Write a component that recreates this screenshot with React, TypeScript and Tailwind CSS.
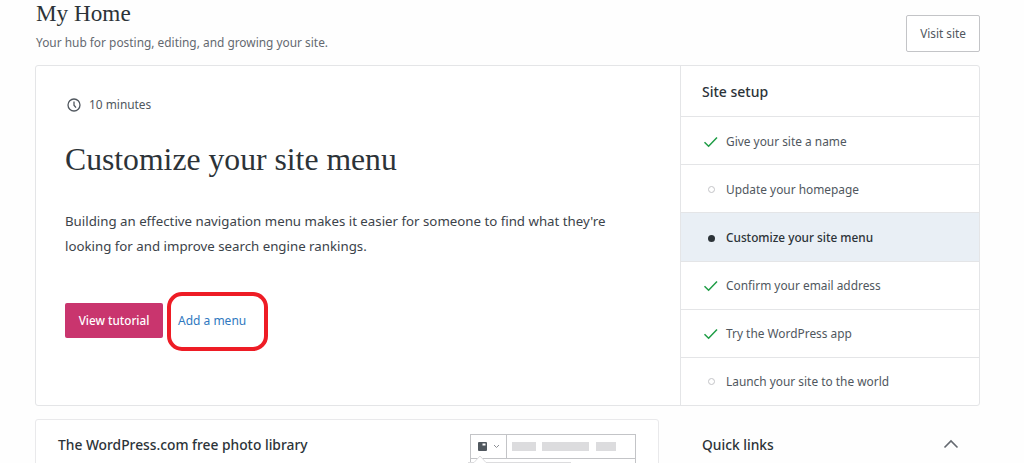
const sans = "font-['Noto_Sans',sans-serif]";

function Check() {
  return (
    <svg width="16" height="12" viewBox="0 0 16 12" fill="none" stroke="#1f9d46" strokeWidth="1.5">
      <path d="M1.5 6.2 L5.6 10.2 L14 1.4" />
    </svg>
  );
}

function Status({ kind }: { kind: string }) {
  if (kind === "done") return <Check />;
  if (kind === "current") return <span className="h-[7px] w-[7px] rounded-full bg-[#2c3338]" />;
  return <span className="h-[7px] w-[7px] rounded-full border border-[#c3c4c7] bg-white" />;
}

const rows = [
  { label: "Give your site a name", kind: "done", h: "h-[48px] pt-[2px]" },
  { label: "Update your homepage", kind: "todo", h: "h-[48px] pt-[2px]" },
  { label: "Customize your site menu", kind: "current", h: "h-[49px] pt-[2px]" },
  { label: "Confirm your email address", kind: "done", h: "h-[48px]" },
  { label: "Try the WordPress app", kind: "done", h: "h-[48px]" },
  { label: "Launch your site to the world", kind: "todo", h: "h-[47px]" },
];

export default function App() {
  return (
    <div className={`relative h-[463px] w-[1024px] overflow-hidden bg-[#fefefe] pl-[35px] pr-[44px] text-[#2c3338] ${sans}`}>
      <header className="flex h-[65px] items-start justify-between">
        <div>
          <h1 className="pl-[1px] font-['Liberation_Serif',serif] text-[23.2px] leading-[26px] text-[#2c3338]">My Home</h1>
          <p className="mt-[7px] pl-[1px] text-[11.9px] leading-[18px] text-[#646970]">Your hub for posting, editing, and growing your site.</p>
        </div>
        <button className="mt-[15px] h-[37px] w-[74px] rounded-[2px] border border-[#c3c4c7] bg-white text-[11.8px] text-[#50575e]">Visit site</button>
      </header>

      <section className="flex h-[341px] rounded-[3px] border border-[#e4e5e7] bg-white">
        <div className="w-[644px] pl-[29px] pt-[29px]">
          <div className="flex h-[20px] items-center gap-[8px] pl-[2px]">
            <svg width="14" height="14" viewBox="0 0 14 14" fill="none" stroke="#50575e" strokeWidth="1.3">
              <circle cx="7" cy="7" r="6" />
              <path d="M7 3.5 V7.2 L9 9.6" />
            </svg>
            <span className="-mt-[1px] text-[11.9px] text-[#50575e]">10 minutes</span>
          </div>
          <h2 className="mt-[25px] font-['Liberation_Serif',serif] text-[31.7px] leading-[40px] text-[#2c3338]">Customize your site menu</h2>
          <p className="mt-[29px] w-[580px] text-[13.27px] leading-[25px] text-[#3c434a]">
            Building an effective navigation menu makes it easier for someone to find what they're looking for and improve search engine rankings.
          </p>
          <div className="mt-[44px] flex items-center gap-[15px]">
            <button className="h-[35px] w-[98px] rounded-[2px] bg-[#c9356e] text-[11.7px] font-medium text-white">View tutorial</button>
            <a className="text-[12px] text-[#2f78c0]">Add a menu</a>
          </div>
        </div>
        <aside className="flex-1 border-l border-[#e4e5e7]">
          <div className="flex h-[51px] items-center border-b border-[#e4e5e7] pl-[21px] text-[14px] font-medium text-[#2c3338]">Site setup</div>
          {rows.map((r, i) => (
            <div
              key={r.label}
              className={`flex items-center ${r.h} ${i < rows.length - 1 ? "border-b border-[#e4e5e7]" : ""} ${r.kind === "current" ? "bg-[#e9eff5] font-medium text-[11.8px] text-[#2c3338]" : "text-[11.9px] text-[#50575e]"}`}
            >
              <span className="flex w-[45px] justify-center pl-[15px]">
                <Status kind={r.kind} />
              </span>
              <span>{r.label}</span>
            </div>
          ))}
        </aside>
      </section>

      <div className="mt-[13px] flex">
        <section className="relative flex h-[80px] w-[624px] rounded-t-[3px] border border-[#e9e9eb] bg-white">
          <h3 className="ml-[22px] mt-[15px] text-[13.8px] font-medium leading-[20px] text-[#2c3338]">The WordPress.com free photo library</h3>
          <div className="relative ml-auto mr-[22px] mt-[14px] h-[60px] w-[166px] border border-[#c3c4c7]">
            <div className="flex h-[24px] items-center border-b border-[#c3c4c7]">
              <div className="flex h-full w-[36px] items-center gap-[6px] border-r border-[#c3c4c7] pl-[7px]">
                <svg width="9" height="9" viewBox="0 0 9 9">
                  <rect width="9" height="9" rx="1" fill="#50575e" />
                  <rect x="4.5" y="1.5" width="3" height="2" fill="#ffffff" />
                </svg>
                <svg width="7" height="5" viewBox="0 0 7 5" fill="none" stroke="#8c8f94" strokeWidth="1"><path d="M1 1 L3.5 3.5 L6 1" /></svg>
              </div>
              <span className="ml-[5px] h-[9px] w-[24px] bg-[#dcdcde]" />
              <span className="ml-[6px] h-[9px] w-[47px] bg-[#dcdcde]" />
              <span className="ml-[7px] h-[9px] w-[20px] bg-[#dcdcde]" />
            </div>
            <svg className="absolute left-[-3px] top-[20px]" width="104" height="12" viewBox="0 0 104 12" fill="#ffffff" stroke="#dcdcde">
              <path d="M0 7.5 H6 L12 1 L18 7.5 H103" />
            </svg>
          </div>
        </section>
        <div className="flex h-[53px] flex-1 items-center justify-between pl-[43px] pr-[21px]">
          <span className="text-[13.8px] font-medium text-[#2c3338]">Quick links</span>
          <svg className="mb-[4px]" width="16" height="10" viewBox="0 0 16 10" fill="none" stroke="#646970" strokeWidth="1.6"><path d="M1.5 8.5 L8 2 L14.5 8.5" /></svg>
        </div>
      </div>

      <svg className="absolute left-[166px] top-[291px]" width="104" height="62" viewBox="0 0 104 62" fill="none">
        <rect x="3" y="3" width="97" height="55" rx="13" stroke="#ee1c25" strokeWidth="4" />
      </svg>
    </div>
  );
}
